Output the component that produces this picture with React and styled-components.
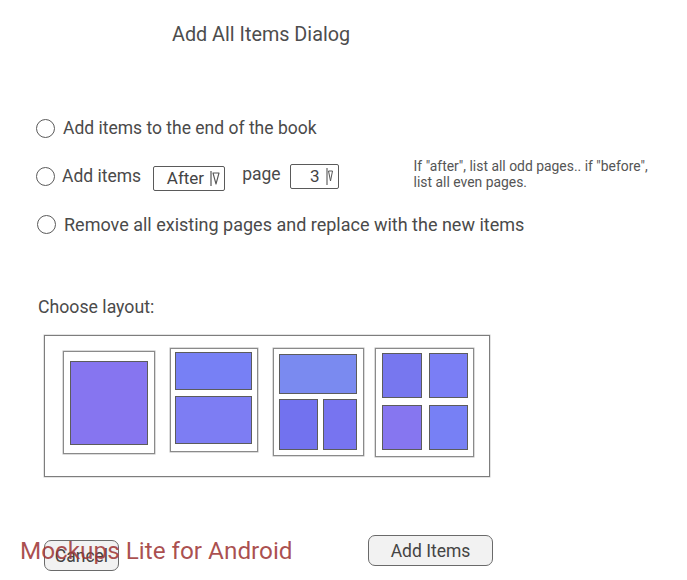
import React from 'react';
import styled, { createGlobalStyle } from 'styled-components';

const GlobalStyle = createGlobalStyle`
  html, body {
    margin: 0;
    padding: 0;
    background: #ffffff;
  }
  * {
    box-sizing: border-box;
  }
`;

const Page = styled.div`
  position: relative;
  width: 687px;
  height: 580px;
  overflow: hidden;
  background: #ffffff;
  font-family: Roboto, "Liberation Sans", sans-serif;
  color: #4a4a4a;
`;

const Title = styled.h1`
  margin: 0;
  padding: 22px 0 0 172px;
  font-size: 19.8px;
  line-height: 26px;
  font-weight: 400;
  color: #4d4d4d;
`;

const Options = styled.div`
  display: flex;
  flex-direction: column;
  margin-top: 56px;
  padding-left: 36px;
`;

const OptionRow = styled.div`
  display: flex;
  align-items: center;
  height: 48px;
  font-size: ${(p) => p.$size || 18}px;
`;

const Radio = styled.span`
  flex: none;
  width: 19px;
  height: 19px;
  border: 1.5px solid #5a5a5a;
  border-radius: 50%;
  margin-left: ${(p) => p.$shift || 0}px;
  margin-right: ${(p) => p.$gap || 8}px;
`;

const Label = styled.span`
  white-space: nowrap;
  margin-right: ${(p) => p.$after || 0}px;
  position: relative;
  top: ${(p) => p.$lift || 0}px;
`;

const Select = styled.div`
  flex: none;
  display: flex;
  align-items: center;
  justify-content: flex-end;
  width: ${(p) => p.$w}px;
  height: 25px;
  margin-right: ${(p) => p.$after || 0}px;
  margin-top: ${(p) => p.$drop || 0}px;
  padding-right: 4px;
  border: 1.5px solid #5a5a5a;
  border-radius: 2px;
  font-size: 17px;
  color: #444;
`;

const SelectValue = styled.span`
  margin-right: 6px;
`;

const Note = styled.div`
  font-size: 13.9px;
  line-height: 16px;
  color: #555;
  margin-top: -4px;
`;

const SectionLabel = styled.div`
  margin-top: 48px;
  padding-left: 38px;
  font-size: 17.7px;
  line-height: 22px;
  color: #4a4a4a;
`;

const LayoutBox = styled.div`
  display: flex;
  align-items: flex-start;
  gap: 15px;
  width: 446px;
  height: 142px;
  margin: 17px 0 0 44px;
  padding: 12px 0 0 18px;
  border: 1.5px solid #7d7d7d;
  box-shadow: 0 0 0 0.5px #c8c8c8;
`;

const Thumb = styled.div`
  flex: none;
  display: grid;
  width: ${(p) => p.$w}px;
  height: ${(p) => p.$h}px;
  margin-top: ${(p) => p.$drop || 0}px;
  margin-left: ${(p) => p.$shift || 0}px;
  padding: ${(p) => p.$pad};
  grid-template-columns: ${(p) => p.$cols || '1fr'};
  grid-template-rows: ${(p) => p.$rows || '1fr'};
  gap: ${(p) => p.$gap || 0}px;
  border: 1.5px solid #8a8a8a;
  box-shadow: 0 0 0 0.5px #b8b8b8;
  background: #ffffff;
`;

const Cell = styled.div`
  background: ${(p) => p.$color};
  border: 1.5px solid #5c5c5c;
  grid-column: ${(p) => (p.$span ? `span ${p.$span}` : 'auto')};
`;

const Footer = styled.div`
  display: flex;
  align-items: flex-start;
  margin-top: 58px;
  padding-left: 44px;
`;

const Button = styled.div`
  flex: none;
  display: flex;
  align-items: center;
  justify-content: center;
  width: ${(p) => p.$w}px;
  height: 31px;
  margin-top: ${(p) => p.$drop || 0}px;
  margin-right: ${(p) => p.$after || 0}px;
  background: #f2f2f2;
  border: 1.5px solid #6a6a6a;
  border-radius: 7px;
  font-size: 17.5px;
  color: #444;
`;

const Watermark = styled.div`
  position: absolute;
  left: 20px;
  top: 536px;
  font-size: 24.3px;
  line-height: 30px;
  color: rgba(160, 56, 56, 0.88);
  white-space: nowrap;
  pointer-events: none;
`;

const DropArrow = () => (
  <svg width="10" height="17" viewBox="0 0 10 17" fill="none">
    <line x1="1" y1="1" x2="1" y2="16" stroke="#555" strokeWidth="1.2" />
    <path d="M3 3 L9 3 L6 14 Z" stroke="#555" strokeWidth="1.1" strokeLinejoin="round" />
  </svg>
);

const NarrowArrow = () => (
  <svg width="8" height="19" viewBox="0 0 8 19" fill="none">
    <line x1="1" y1="1" x2="1" y2="18" stroke="#555" strokeWidth="1.1" />
    <path d="M2.5 4 L6.5 4 L4.5 14 Z" stroke="#555" strokeWidth="1" strokeLinejoin="round" />
  </svg>
);

export default function App() {
  return (
    <Page>
      <GlobalStyle />
      <Title>Add All Items Dialog</Title>

      <Options>
        <OptionRow $size={17.5}>
          <Radio />
          <Label>Add items to the end of the book</Label>
        </OptionRow>
        <OptionRow $size={17.5}>
          <Radio $gap={7} />
          <Label $after={12}>Add items</Label>
          <Select $w={72} $after={17} $drop={4}>
            <SelectValue>After</SelectValue>
            <DropArrow />
          </Select>
          <Label $after={9} $lift={-2}>page</Label>
          <Select $w={49} $after={75}>
            <SelectValue>3</SelectValue>
            <NarrowArrow />
          </Select>
          <Note>
            If "after", list all odd pages.. if "before",
            <br />
            list all even pages.
          </Note>
        </OptionRow>
        <OptionRow>
          <Radio $shift={1} />
          <Label>Remove all existing pages and replace with the new items</Label>
        </OptionRow>
      </Options>

      <SectionLabel>Choose layout:</SectionLabel>

      <LayoutBox>
        <Thumb $w={92} $h={103} $drop={3} $pad="9px 6px 8px 6px">
          <Cell $color="#8675f0" />
        </Thumb>
        <Thumb $w={88} $h={104} $pad="3px 5px 7px 4px" $rows="38px 1fr" $gap={6}>
          <Cell $color="#7780f5" />
          <Cell $color="#7d7df3" />
        </Thumb>
        <Thumb $w={91} $h={108} $pad="5px 6px 5px 5px" $cols="39px 1fr" $rows="40px 1fr" $gap={5}>
          <Cell $color="#7a8af0" $span={2} />
          <Cell $color="#7272ef" />
          <Cell $color="#7774f0" />
        </Thumb>
        <Thumb $w={99} $h={109} $shift={-4} $pad="4px 5px 6px 6px" $cols="1fr 1fr" $rows="1fr 1fr" $gap={7}>
          <Cell $color="#7777ef" />
          <Cell $color="#7a7ef5" />
          <Cell $color="#8676f0" />
          <Cell $color="#7780f5" />
        </Thumb>
      </LayoutBox>

      <Footer>
        <Button $w={75} $drop={5} $after={249}>Cancel</Button>
        <Button $w={125}>Add Items</Button>
      </Footer>

      <Watermark>Mockups Lite for Android</Watermark>
    </Page>
  );
}
